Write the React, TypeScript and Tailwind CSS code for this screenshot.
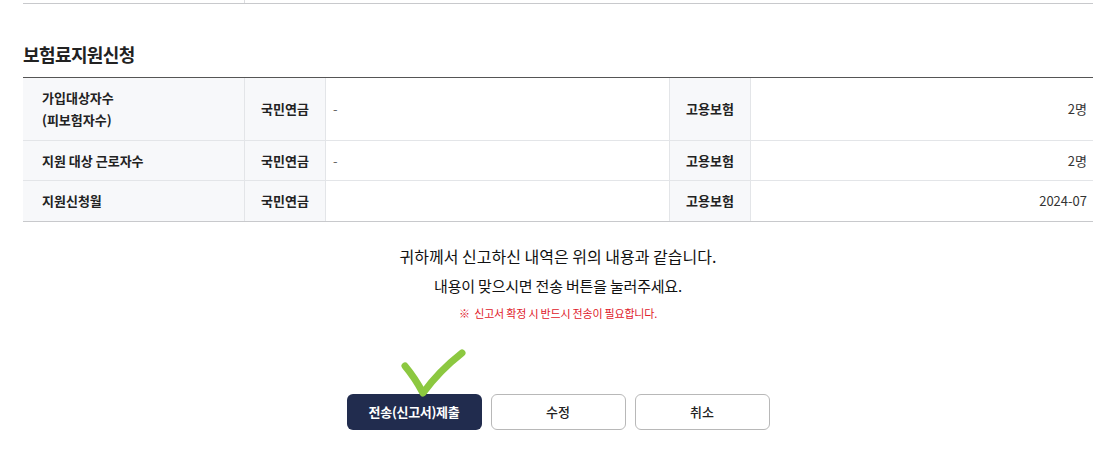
import React from 'react';

const th = "bg-[#f7f8fa] border-r border-[#e3e5e8] flex items-center text-[13px] font-bold text-[#222]";
const td = "border-r border-[#e3e5e8] flex items-center text-[13px] text-[#333]";

const rows = [
  { label: ['가입대상자수', '(피보험자수)'], pension: '-', employ: '2명', h: 'h-[63px]' },
  { label: ['지원 대상 근로자수'], pension: '-', employ: '2명', h: 'h-[40px]' },
  { label: ['지원신청월'], pension: '', employ: '2024-07', h: 'h-[40px]' },
];

export default function App() {
  return (
    <div className="w-[1106px] h-[460px] bg-white font-['Noto_Sans_CJK_KR','Noto_Sans',sans-serif] text-[#222]">
      <div className="ml-[23px] w-[1070px]">
        {/* tail of previous table */}
        <div className="h-[4px] border-b border-[#c8c9cc] flex">
          <div className="w-[222px] border-r border-[#dcdde0]" />
        </div>

        <h2 className="mt-[38px] mb-[11px] text-[18px] leading-[24px] font-bold tracking-[-0.6px]">보험료지원신청</h2>

        <div className="border-t border-[#555] border-b border-b-[#c8c9cc]">
          {rows.map((r, i) => (
            <div
              key={i}
              className={`grid grid-cols-[222px_81px_344px_81px_1fr] ${r.h} ${i < rows.length - 1 ? 'border-b border-[#e3e5e8]' : ''}`}
            >
              <div className={`${th} pl-[19px]`}>
                <div className="leading-[22px]">
                  {r.label.map((l) => (
                    <div key={l}>{l}</div>
                  ))}
                </div>
              </div>
              <div className={`${th} justify-center`}>국민연금</div>
              <div className={`${td} pl-[7px] text-[#666]`}>{r.pension}</div>
              <div className={`${th} justify-center`}>고용보험</div>
              <div className="flex items-center justify-end pr-[6px] text-[13px] text-[#333]">{r.employ}</div>
            </div>
          ))}
        </div>

        <div className="flex flex-col items-center">
          <p className="mt-[22px] text-[16px] leading-[24px] text-[#111]">귀하께서 신고하신 내역은 위의 내용과 같습니다.</p>
          <p className="mt-[6px] text-[15px] leading-[24px] tracking-[-0.2px] text-[#111]">내용이 맞으시면 전송 버튼을 눌러주세요.</p>
          <p className="mt-[7px] text-[11px] leading-[16px] tracking-[-0.2px] text-[#e0202a]">※&nbsp; 신고서 확정 시 반드시 전송이 필요합니다.</p>

          <div className="mt-[73px] flex gap-[9px]">
            <div className="relative">
              <button className="w-[135px] h-[36px] rounded-[6px] bg-[#212c4e] text-white text-[13px] font-bold tracking-[-0.3px]">
                전송(신고서)제출
              </button>
              <svg
                className="absolute left-[48px] top-[-50px] w-[75px] h-[56px] pointer-events-none"
                viewBox="0 0 75 56"
                fill="none"
              >
                <path
                  d="M10 22 Q20 34 28 49 Q44 27 67 9"
                  stroke="#8cc840"
                  strokeWidth="7"
                  strokeLinecap="round"
                  strokeLinejoin="round"
                />
              </svg>
            </div>
            <button className="w-[135px] h-[36px] rounded-[6px] border border-[#b8b8b8] bg-white text-[13px] font-medium text-[#222]">
              수정
            </button>
            <button className="w-[135px] h-[36px] rounded-[6px] border border-[#b8b8b8] bg-white text-[13px] font-medium text-[#222]">
              취소
            </button>
          </div>
        </div>
      </div>
    </div>
  );
}
